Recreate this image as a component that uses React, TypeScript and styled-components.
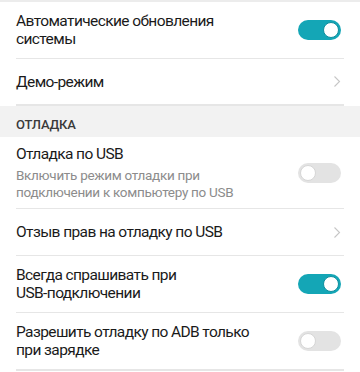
import type { ReactNode } from 'react';
import { createGlobalStyle, styled } from 'styled-components';

const GlobalStyle = createGlobalStyle`
  html, body {
    margin: 0;
    padding: 0;
    background: #ffffff;
  }
  body {
    font-family: Roboto, "Noto Sans", sans-serif;
    -webkit-font-smoothing: antialiased;
  }
`;

const NoWrap = styled.span`
  white-space: nowrap;
`;

const Page = styled.div`
  width: 360px;
  height: 372px;
  overflow: hidden;
  background: #ffffff;
  display: flex;
  flex-direction: column;
`;

const List = styled.div<{ $top?: boolean }>`
  display: flex;
  flex-direction: column;
  padding: 0 16px;
  border-top: ${(p) => (p.$top ? '2px solid #ececec' : 'none')};
`;

const RowBox = styled.div<{ $height: number }>`
  height: ${(p) => p.$height}px;
  flex-shrink: 0;
  box-sizing: border-box;
  display: flex;
  align-items: center;
  justify-content: space-between;
  gap: 16px;
  border-bottom: 1px solid #e6e6e6;
  &:last-child {
    border-bottom: 2px solid #e6e6e6;
  }
`;

const Texts = styled.div`
  display: flex;
  flex-direction: column;
  max-width: 250px;
`;

const Title = styled.div`
  font-size: 15.5px;
  line-height: 18px;
  letter-spacing: -0.6px;
  color: #1a1a1a;
`;

const Subtitle = styled.div`
  font-size: 13.5px;
  line-height: 17px;
  letter-spacing: -0.3px;
  color: #8c8c8c;
  margin-top: 4px;
`;

const SectionHeader = styled.div`
  height: 31px;
  flex-shrink: 0;
  background: #f2f2f2;
  display: flex;
  align-items: center;
  padding: 5px 16px 0;
  box-sizing: border-box;
  font-size: 13px;
  font-weight: 500;
  letter-spacing: -0.2px;
  color: #3a3a3a;
`;

const Switch = styled.div<{ $on: boolean }>`
  width: 43px;
  height: 20px;
  border-radius: 10px;
  margin-right: 3px;
  flex-shrink: 0;
  background: ${(p) => (p.$on ? '#14a6b6' : '#e3e3e3')};
  display: flex;
  align-items: center;
  justify-content: ${(p) => (p.$on ? 'flex-end' : 'flex-start')};
  padding: 0 2px;
  box-sizing: border-box;
`;

const Knob = styled.div<{ $on: boolean }>`
  width: 16px;
  height: 16px;
  border-radius: 50%;
  background: #ffffff;
  box-sizing: border-box;
  border: 1px solid ${(p) => (p.$on ? '#0f8f9e' : '#d6d6d6')};
`;

const ChevronBox = styled.div`
  display: flex;
  align-items: center;
  margin-right: 3px;
`;

type Item =
  | { kind: 'toggle'; title: ReactNode; subtitle?: string; on: boolean; height: number }
  | { kind: 'link'; title: ReactNode; height: number };

const topItems: Item[] = [
  { kind: 'toggle', title: 'Автоматические обновления системы', on: true, height: 57 },
  { kind: 'link', title: 'Демо-режим', height: 47 },
];

const debugItems: Item[] = [
  {
    kind: 'toggle',
    title: 'Отладка по USB',
    subtitle: 'Включить режим отладки при подключении к компьютеру по USB',
    on: false,
    height: 72,
  },
  { kind: 'link', title: 'Отзыв прав на отладку по USB', height: 47 },
  {
    kind: 'toggle',
    title: (
      <>
        Всегда спрашивать при <NoWrap>USB-подключении</NoWrap>
      </>
    ),
    on: true,
    height: 57,
  },
  { kind: 'toggle', title: 'Разрешить отладку по ADB только при зарядке', on: false, height: 58 },
];

const Chevron = () => (
  <svg width="8" height="13" viewBox="0 0 8 13">
    <path d="M1.5 1.5 L6.5 6.5 L1.5 11.5" fill="none" stroke="#c6c6c6" strokeWidth="1.1" />
  </svg>
);

const Row = ({ item }: { item: Item }) => (
  <RowBox $height={item.height}>
    <Texts>
      <Title>{item.title}</Title>
      {item.kind === 'toggle' && item.subtitle && <Subtitle>{item.subtitle}</Subtitle>}
    </Texts>
    {item.kind === 'toggle' ? (
      <Switch $on={item.on}>
        <Knob $on={item.on} />
      </Switch>
    ) : (
      <ChevronBox>
        <Chevron />
      </ChevronBox>
    )}
  </RowBox>
);

const App = () => (
  <>
    <GlobalStyle />
    <Page>
      <List $top>
        {topItems.map((item, i) => (
          <Row key={i} item={item} />
        ))}
      </List>
      <SectionHeader>ОТЛАДКА</SectionHeader>
      <List>
        {debugItems.map((item, i) => (
          <Row key={i} item={item} />
        ))}
      </List>
    </Page>
  </>
);

export default App;
